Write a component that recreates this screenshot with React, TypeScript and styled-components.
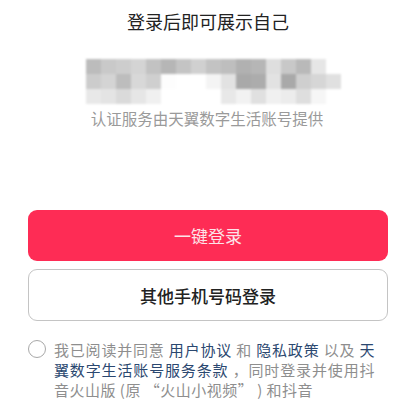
import React from 'react';
import styled, { createGlobalStyle } from 'styled-components';

const GlobalStyle = createGlobalStyle`
  html, body {
    margin: 0;
    padding: 0;
    background: #ffffff;
  }
  body {
    font-family: "Noto Sans CJK SC", "Noto Sans", sans-serif;
  }
`;

const Page = styled.div`
  width: 415px;
  height: 419px;
  overflow: hidden;
  padding: 0 27px 0 28px;
  box-sizing: border-box;
  display: flex;
  flex-direction: column;
`;

const Title = styled.h1`
  margin: 9px 0 0;
  font-size: 18px;
  line-height: 24px;
  font-weight: 400;
  color: #222222;
  text-align: center;
`;

const Mosaic = styled.div`
  margin: 26px 0 0 58px;
  display: grid;
  grid-template-columns: repeat(17, 15px);
  grid-auto-rows: 15px;
  filter: blur(1.2px);
`;

const Block = styled.div<{ $shade: string }>`
  background: ${p => p.$shade};
`;

const Caption = styled.p`
  margin: 4px 0 0;
  font-size: 15.5px;
  line-height: 20px;
  color: #9a9a9a;
  text-align: center;
  padding-right: 2px;
`;

const Actions = styled.div`
  margin-top: 82px;
  display: flex;
  flex-direction: column;
  gap: 8px;
`;

const Button = styled.button<{ $primary?: boolean }>`
  height: ${p => (p.$primary ? '51px' : '52px')};
  width: 100%;
  border-radius: 9px;
  font-family: inherit;
  font-size: 17px;
  cursor: pointer;
  border: ${p => (p.$primary ? 'none' : '1px solid #c4c4c4')};
  background: ${p => (p.$primary ? '#fe2c55' : '#ffffff')};
  color: ${p => (p.$primary ? '#fde3e8' : '#222222')};
  font-weight: ${p => (p.$primary ? 400 : 500)};
`;

const Agreement = styled.div`
  margin-top: 19px;
  display: flex;
  gap: 8px;
  align-items: flex-start;
`;

const Radio = styled.span`
  flex: none;
  width: 16px;
  height: 16px;
  margin-top: 0px;
  border: 1.5px solid #a8a8a8;
  border-radius: 50%;
`;

const Terms = styled.p`
  margin: 0;
  width: 321px;
  font-size: 15px;
  line-height: 20px;
  letter-spacing: 0.5px;
  text-align: justify;
  color: #8e8e8e;
`;

const Link = styled.span`
  color: #2b4870;
`;

const shades = [
  ['#bcbcbc', '#c9c9c9', '#cdcdcd', '#d4d4d4', '#c2c2c2', '#b6b6b6', '#c4c4c4', '#d0d0d0', '#c3c3c3', '#bebebe', '#b1b1b1', '#b6b6b6', '#dedede', '#c8c8c8', '#b9b9b9', '#e6e6e6', '#ffffff'],
  ['#cccccc', '#d4d4d4', '#bdbdbd', '#d8d8d8', '#cfcfcf', '#fdfdfd', '#ffffff', '#ffffff', '#f4f4f4', '#e2e2e2', '#a9a9a9', '#acacac', '#e2e2e2', '#a9a9a9', '#cfcfcf', '#d6d6d6', '#e0e0e0'],
  ['#e8e8e8', '#e4e4e4', '#dadada', '#e6e6e6', '#f0f0f0', '#ffffff', '#ffffff', '#ffffff', '#ffffff', '#e8e8e8', '#f2f2f2', '#e0e0e0', '#f0f0f0', '#ececec', '#dedede', '#f6f6f6', '#ffffff'],
];

const App = () => {
  return (
    <>
      <GlobalStyle />
      <Page>
        <Title>登录后即可展示自己</Title>
        <Mosaic>
          {shades.flat().map((shade, i) => (
            <Block key={i} $shade={shade} />
          ))}
        </Mosaic>
        <Caption>认证服务由天翼数字生活账号提供</Caption>

        <Actions>
          <Button $primary>一键登录</Button>
          <Button>其他手机号码登录</Button>
        </Actions>

        <Agreement>
          <Radio />
          <Terms>
            我已阅读并同意 <Link>用户协议</Link> 和 <Link>隐私政策</Link> 以及 <Link>天翼数字生活账号服务条款</Link> ，同时登录并使用抖音火山版 (原 “火山小视频” ) 和抖音
          </Terms>
        </Agreement>
      </Page>
    </>
  );
};

export default App;
